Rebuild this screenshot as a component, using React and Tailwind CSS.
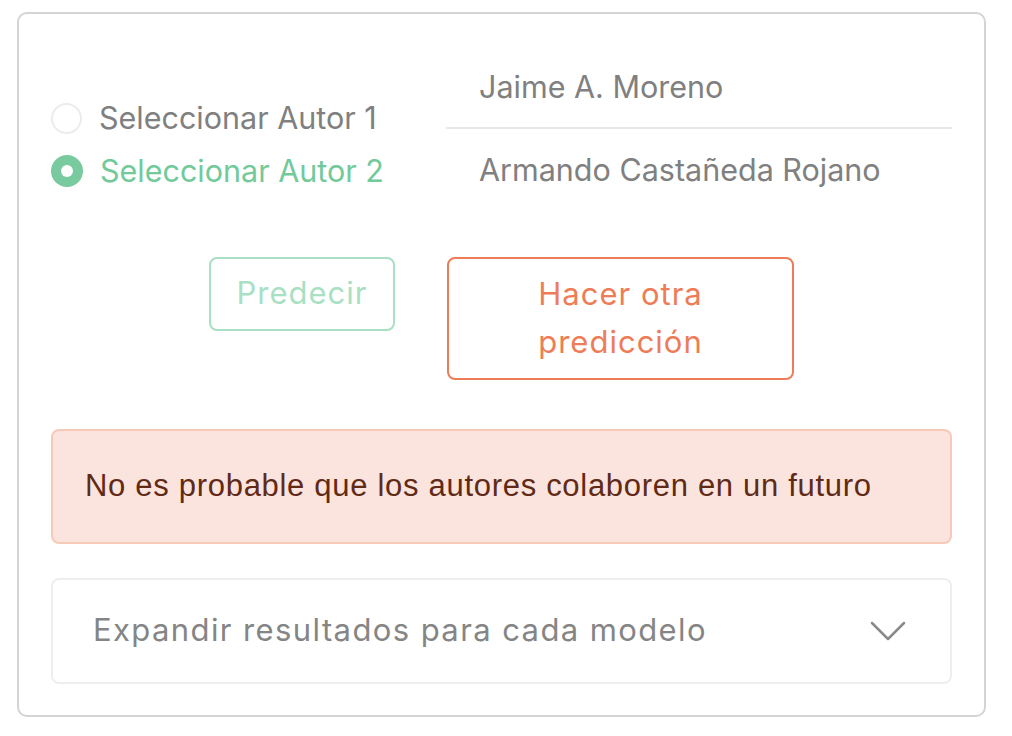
import React from "react";

export default function App() {
  return (
    <div className="w-[1012px] h-[736px] bg-white pt-[12px] pl-[17px]" style={{ fontFamily: "Inter, 'Liberation Sans', sans-serif" }}>
      <div className="w-[969px] h-[705px] border-2 border-[#d4d4d4] rounded-[10px] px-[32px] pt-[33px]">
        {/* top row */}
        <div className="flex items-start">
          <div className="w-[395px] pt-[56px] flex flex-col gap-[23px]">
            <label className="flex items-center gap-[17px] h-[30px]">
              <span className="w-[31px] h-[31px] rounded-full border-2 border-[#ececec] bg-white" />
              <span className="text-[30.5px] leading-none text-[#808080]">Seleccionar Autor 1</span>
            </label>
            <label className="flex items-center gap-[17px] h-[30px]">
              <span className="w-[32px] h-[32px] rounded-full bg-[#79ca9e] flex items-center justify-center">
                <span className="w-[12px] h-[12px] rounded-full bg-white" />
              </span>
              <span className="text-[30.5px] leading-none text-[#72c99a]">Seleccionar Autor 2</span>
            </label>
          </div>
          <div className="flex-1 flex flex-col">
            <div className="h-[80px] flex items-center pl-[33px] text-[30.5px] text-[#808080]">Jaime A. Moreno</div>
            <div className="h-[1.5px] bg-[#e6e8ea]" />
            <div className="h-[82px] flex items-center pl-[33px] text-[30.5px] text-[#808080]">Armando Castañeda Rojano</div>
          </div>
        </div>

        {/* buttons */}
        <div className="flex justify-center items-start gap-[52px] mt-[46px]">
          <button className="w-[186px] h-[74px] border-2 border-[#a9dfc3] rounded-[8px] text-[31px] tracking-[1px] text-[#a9dfc3]">
            Predecir
          </button>
          <button className="w-[347px] h-[123px] border-2 border-[#ee7d57] rounded-[8px] text-[31px] tracking-[1px] leading-[48px] text-[#ee7d57]">
            Hacer otra
            <br />
            predicción
          </button>
        </div>

        {/* alert */}
        <div className="mt-[49px] h-[115px] border-2 border-[#f7c9b8] bg-[#fbe4dd] rounded-[8px] flex items-center pl-[32px] text-[31px] tracking-[0.7px] text-[#602a16]" style={{ fontFamily: "'Liberation Sans', Arial, sans-serif" }}>
          No es probable que los autores colaboren en un futuro
        </div>

        {/* expand */}
        <div className="mt-[34px] h-[106px] border-2 border-[#eeeeee] rounded-[8px] flex items-center justify-between pl-[40px] pr-[44px]">
          <span className="text-[31px] tracking-[1.4px] text-[#858585]">Expandir resultados para cada modelo</span>
          <svg width="36" height="20" viewBox="0 0 36 20" fill="none" stroke="#8a8a8a" strokeWidth="2.5" strokeLinecap="round" strokeLinejoin="round">
            <path d="M2 2 L18 18 L34 2" />
          </svg>
        </div>
      </div>
    </div>
  );
}
